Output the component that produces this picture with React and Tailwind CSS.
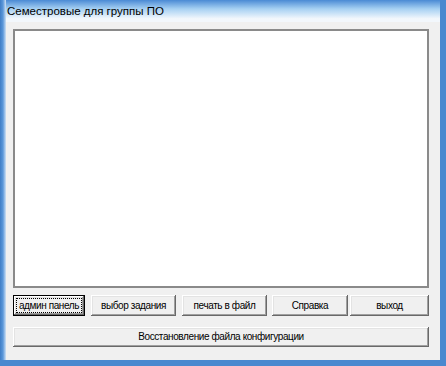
import React from "react";

const font = { fontFamily: '"Liberation Sans", Arial, sans-serif' };

const bevel =
  "bg-[#f0f0f0] shadow-[inset_-1px_-1px_0_#696969,inset_1px_1px_0_#ffffff,inset_-2px_-2px_0_#a0a0a0,inset_2px_2px_0_#e3e3e3]";

const label = "text-[10px] tracking-[-0.4px] text-black leading-none whitespace-nowrap";

const WinButton = ({ text, className = "", focused = false }) => {
  if (focused) {
    return (
      <div className={`border border-black ${className}`}>
        <div className={`h-full p-[2px] ${bevel}`}>
          <div className={`h-full flex items-center justify-center border border-dotted border-black ${label}`}>
            {text}
          </div>
        </div>
      </div>
    );
  }
  return (
    <div className={`flex items-center justify-center ${label} ${bevel} ${className}`}>
      {text}
    </div>
  );
};

export default function App() {
  return (
    <div
      className="w-[446px] h-[366px] bg-[#4a88cf] flex pr-[7px] pb-[6px]"
      style={font}
    >
      {/* Left frame edge */}
      <div className="w-[6px] shrink-0 bg-gradient-to-r from-[#3f7dc6] via-[#5c98da] to-[#cfe1f3]" />

      <div className="flex-1 flex flex-col">
        {/* Title bar */}
        <div className="h-[22px] shrink-0 pl-[1px] bg-gradient-to-b from-[#4a8ad4] via-[#a6d0f2] via-40% to-[#f2f7fc] to-85% flex items-end pb-[5px]">
          <span className="text-[11.5px] text-black leading-none">
            Семестровые для группы ПО
          </span>
        </div>

        {/* Client area */}
        <div className="flex-1 bg-[#f0f0f0] flex flex-col pl-[7px] pr-[11px] pt-[7px]">
          {/* Output box */}
          <div className="h-[259px] bg-white border-2 border-[#8a8a8a]" />

          {/* Button row */}
          <div className="flex mt-[7px] h-[21px]">
            <WinButton text="админ панель" focused className="w-[72px]" />
            <WinButton text="выбор задания" className="w-[85px] ml-[6px]" />
            <WinButton text="печать в файл" className="w-[85px] ml-[6px]" />
            <WinButton text="Справка" className="w-[76px] ml-[5px]" />
            <WinButton text="выход" className="w-[79px] ml-[2px]" />
          </div>

          <WinButton
            text="Восстановление файла конфигурации"
            className="h-[20px] mt-[11px]"
          />
        </div>
      </div>
    </div>
  );
}
